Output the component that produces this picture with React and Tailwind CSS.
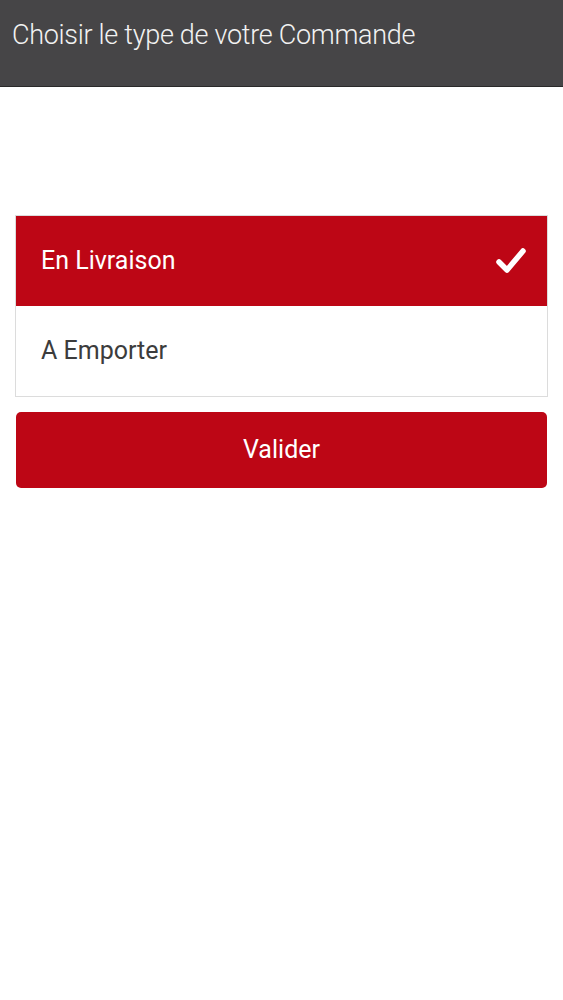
import { useState } from "react";

const OPTIONS = ["En Livraison", "A Emporter"];

const Check = () => (
	<svg width="32" height="30" viewBox="0 0 32 30" className="block">
		<polyline points="4,16 12,24 28,5" fill="none" stroke="white" strokeWidth="5.5" strokeLinecap="round" strokeLinejoin="round" />
	</svg>
);

export default function App() {
	const [selected, setSelected] = useState(0);

	return (
		<div className="min-h-screen bg-white font-['Roboto',sans-serif]">
			<header className="h-[87px] bg-[#464547] border-b border-[#2a2a2a] flex items-start pt-[17px] pl-[12px]">
				<h1 className="text-[#f2f2f2] text-[27px] font-light leading-9 tracking-[-0.3px]">Choisir le type de votre Commande</h1>
			</header>

			<main className="px-[15px] pt-[128px]">
				<ul className="border border-[#dcdcdc]">
					{OPTIONS.map((opt, i) => (
						<li
							key={opt}
							onClick={() => setSelected(i)}
							className={
								i === selected
									? "h-[90px] flex items-center justify-between pl-[25px] pr-[20px] bg-[#bd0615] text-white text-[25px]"
									: "h-[90px] flex items-center justify-between pl-[25px] pr-[20px] bg-white text-[#3c3c3c] text-[25px]"
							}
						>
							<span>{opt}</span>
							{i === selected && <Check />}
						</li>
					))}
				</ul>

				<button className="mt-[15px] mx-px w-[calc(100%-2px)] h-[76px] rounded-[5px] bg-[#bd0615] text-white text-[25px] flex items-center justify-center">
					Valider
				</button>
			</main>
		</div>
	);
}
